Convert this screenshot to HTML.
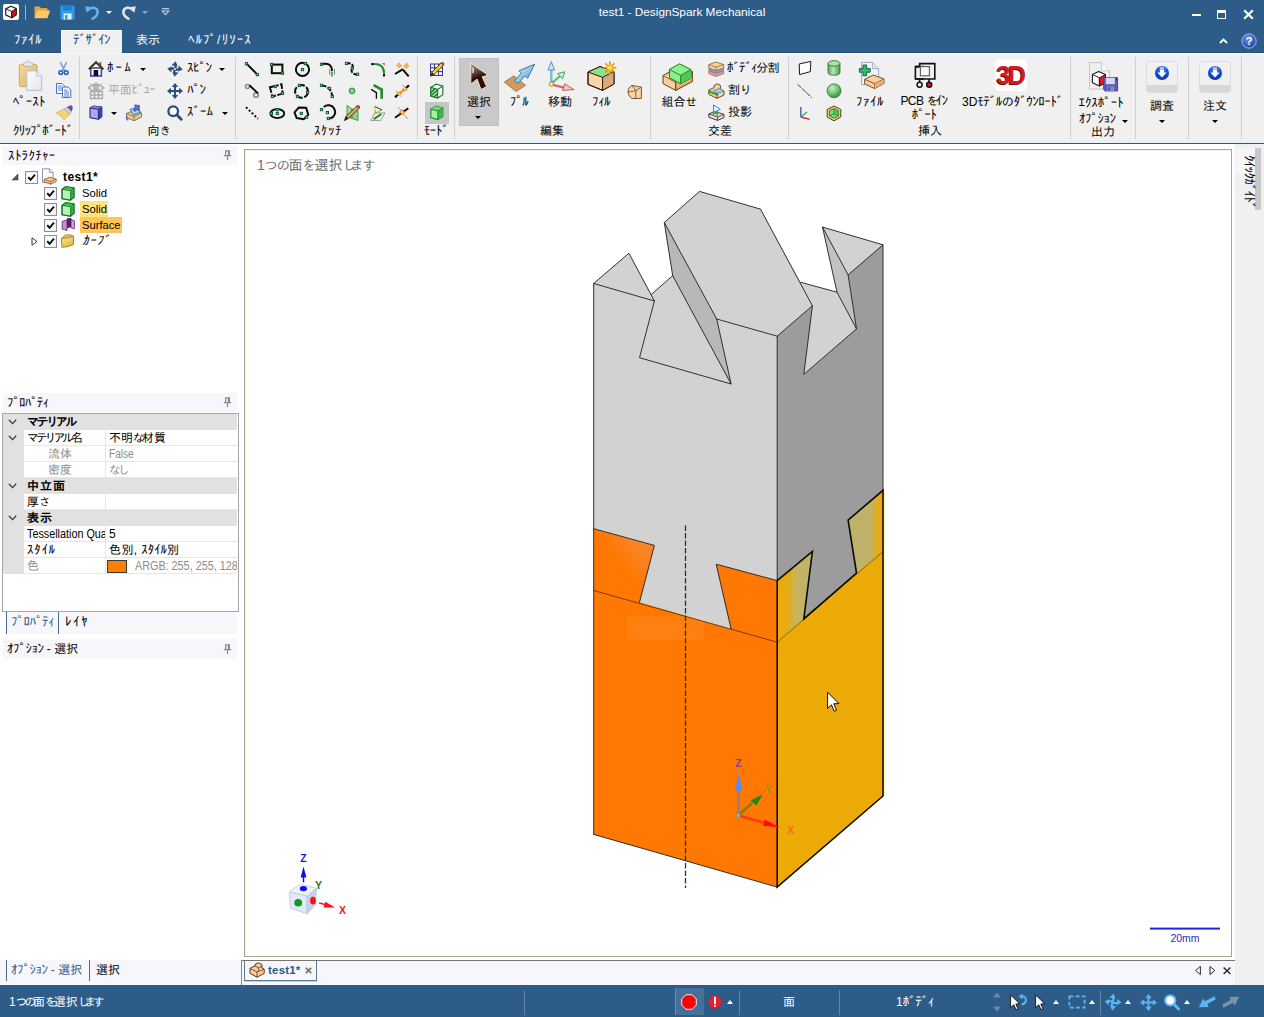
<!DOCTYPE html>
<html lang="ja">
<head>
<meta charset="utf-8">
<title>test1 - DesignSpark Mechanical</title>
<style>
html,body{margin:0;padding:0}
body{width:1264px;height:1017px;position:relative;overflow:hidden;background:#f5f5fa;
 font:12px "Liberation Sans","IPAGothic",sans-serif;color:#000}
.a{position:absolute}
.t{position:absolute;white-space:nowrap;line-height:14px;height:14px}
.c{text-align:center}
.h{font-size:13px}
.k{font-size:11.5px;letter-spacing:-2.6px}
.k2{font-size:13px;letter-spacing:-1.1px}
.k3{font-size:11.5px;letter-spacing:-2.8px}
.s3{letter-spacing:-5px}
.s2{letter-spacing:-5px}
.n{display:inline-block;transform:scaleX(.84);transform-origin:0 50%}
.w{color:#fff}
.g{color:#8c8c8c}
.sep{position:absolute;width:1px;background:#cfcfcf;top:57px;height:82px}
svg{position:absolute;overflow:visible}
.dd{position:absolute;width:0;height:0;border-left:3px solid transparent;border-right:3px solid transparent;border-top:3px solid #000}
.ud{position:absolute;width:0;height:0;border-left:3.5px solid transparent;border-right:3.5px solid transparent;border-bottom:4px solid #fff}
.cb{position:absolute;width:11px;height:11px;border:1px solid #8e8f8f;background:#fff;box-shadow:inset 0 0 0 1px #f0f0f0}
.cb svg{left:1px;top:1px}
.row{position:absolute;left:3px;width:234px;height:16px}
.row .t{top:1px}
</style>
</head>
<body>
<!-- title bar + tab strip -->
<div class="a" style="left:0;top:0;width:1264px;height:53px;background:#2d5c88"></div>
<div class="a" style="left:0;top:52px;width:1264px;height:1px;background:#2a5078"></div>
<!-- app icon -->
<div class="a" style="left:3px;top:4px;width:16px;height:16px;background:#fff;border-radius:2px"></div>
<svg style="left:3px;top:4px" width="16" height="16" viewBox="0 0 16 16">
 <path d="M8 2.2 L13.3 4.6 L13.3 10.8 L8.6 13.8 L2.7 10.9 L2.7 4.9 Z" fill="#fff" stroke="#222" stroke-width="1.2" stroke-linejoin="round"/>
 <path d="M8.6 7.4 L13.3 4.6 L13.3 10.8 L8.6 13.8 Z" fill="#d8101c" stroke="#222" stroke-width="1"/>
 <path d="M2.7 4.9 L8.6 7.4 L8.6 13.8" fill="none" stroke="#222" stroke-width="1"/>
</svg>
<div class="a" style="left:25px;top:5px;width:1px;height:15px;background:#9fb4c9"></div>
<!-- folder -->
<svg style="left:34px;top:5px" width="17" height="15" viewBox="0 0 17 15">
 <path d="M0.5 2.5 Q0.5 1.5 1.5 1.5 L5.5 1.5 L7 3 L12.5 3 Q13.5 3 13.5 4 L13.5 13 L0.5 13 Z" fill="#e8a33a"/>
 <path d="M3.2 5.5 L16.2 5.5 L13.4 13.2 L0.6 13.2 Z" fill="#fdc866"/>
</svg>
<!-- save -->
<svg style="left:60px;top:5px" width="15" height="15" viewBox="0 0 15 15">
 <path d="M0.5 0.5 L13 0.5 L14.5 2 L14.5 14.5 L0.5 14.5 Z" fill="#2f9bf0"/>
 <rect x="3" y="0.5" width="8.5" height="5" fill="#1b7fd8"/>
 <rect x="3.5" y="8.5" width="8" height="6" fill="#e9f3fc"/>
 <rect x="5" y="10" width="2.5" height="4.5" fill="#2f9bf0"/>
</svg>
<!-- undo -->
<svg style="left:84px;top:4px" width="17" height="17" viewBox="0 0 17 17">
 <path d="M4.2 5.8 C7 2.5 13.6 3 13.6 8.3 C13.6 11.5 11.5 13.2 8.6 14.6" fill="none" stroke="#5eb3f3" stroke-width="2.6" stroke-linecap="round"/>
 <path d="M1.2 2.2 L7.6 3.2 L2.6 8.8 Z" fill="#5eb3f3"/>
</svg>
<div class="dd" style="left:106px;top:11px;border-top-color:#fff"></div>
<!-- redo -->
<svg style="left:120px;top:4px" width="17" height="17" viewBox="0 0 17 17">
 <path d="M12.8 5.8 C10 2.5 3.4 3 3.4 8.3 C3.4 11.5 5.5 13.2 8.4 14.6" fill="none" stroke="#dfe6ec" stroke-width="2.6" stroke-linecap="round"/>
 <path d="M15.8 2.2 L9.4 3.2 L14.4 8.8 Z" fill="#dfe6ec"/>
</svg>
<div class="dd" style="left:142px;top:11px;border-top-color:#8fa5ba"></div>
<!-- customize -->
<svg style="left:161px;top:8px" width="9" height="8" viewBox="0 0 9 8">
 <path d="M1 0.7 H8" stroke="#c5d2de" stroke-width="1.2"/>
 <path d="M1.2 3 L4.5 6.6 L7.8 3 Z" fill="none" stroke="#c5d2de" stroke-width="1.1"/>
</svg>
<div class="t w c" id="ttl" style="left:532px;width:300px;top:5px;font-size:11.8px">test1 - DesignSpark Mechanical</div>
<!-- window controls -->
<div class="a" style="left:1192px;top:14px;width:9px;height:2px;background:#fff"></div>
<div class="a" style="left:1217px;top:10px;width:7px;height:5px;border:1.5px solid #fff;border-top-width:3px"></div>
<svg style="left:1243px;top:9px" width="11" height="11" viewBox="0 0 11 11"><path d="M1.2 1.2 L9.8 9.8 M9.8 1.2 L1.2 9.8" stroke="#fff" stroke-width="2.2"/></svg>
<!-- tabs -->
<div class="a" style="left:61px;top:30px;width:61px;height:23px;background:#f0f0f0;box-shadow:inset 1px 1px 0 #fafcff"></div>
<div class="t w" id="tab1" style="left:14px;top:33px;letter-spacing:1px"><span class="h" style="letter-spacing:0.50px">ﾌｧｲﾙ</span></div>
<div class="t" id="tab2" style="left:73px;top:33px;color:#1e3f63"><span class="h" style="letter-spacing:-0.50px">ﾃﾞｻﾞｲﾝ</span></div>
<div class="t w" id="tab3" style="left:136px;top:33px">表示</div>
<div class="t w" id="tab4" style="left:188px;top:33px;letter-spacing:1.5px"><span class="h" style="letter-spacing:1.00px">ﾍﾙﾌﾟ</span>/<span class="h" style="letter-spacing:1.00px">ﾘｿｰｽ</span></div>
<svg style="left:1219px;top:38px" width="9" height="6" viewBox="0 0 9 6"><path d="M0.9 5 L4.5 1.6 L8.1 5" fill="none" stroke="#fff" stroke-width="1.8"/></svg>
<svg style="left:1241px;top:33px" width="16" height="16" viewBox="0 0 16 16">
 <defs><radialGradient id="hg" cx="0.4" cy="0.3" r="0.8"><stop offset="0" stop-color="#6f8fe0"/><stop offset="1" stop-color="#1a3da8"/></radialGradient></defs>
 <circle cx="8" cy="8" r="7.2" fill="url(#hg)" stroke="#9fb6e6" stroke-width="1"/>
 <text x="8" y="12" text-anchor="middle" font-family="Liberation Sans, sans-serif" font-weight="bold" font-size="11" fill="#fff">?</text>
</svg>
<!-- ribbon background -->
<div class="a" style="left:0;top:53px;width:1264px;height:89px;background:#f0f0f0"></div>
<div class="a" style="left:0;top:142px;width:1264px;height:1px;background:#e2f1ff"></div>
<div class="a" style="left:0;top:53px;width:1264px;height:1px;background:#f3faff"></div>
<div class="a" style="left:0;top:143px;width:1264px;height:1px;background:#3c546c"></div>
<div class="sep" style="left:79px"></div>
<div class="sep" style="left:235px"></div>
<div class="sep" style="left:417px"></div>
<div class="sep" style="left:454px"></div>
<div class="sep" style="left:650px"></div>
<div class="sep" style="left:788px"></div>
<div class="sep" style="left:1070px"></div>
<div class="sep" style="left:1135px"></div>
<div class="sep" style="left:1188px"></div>
<div class="sep" style="left:1241px"></div>
<!-- group labels -->
<div class="t" id="gl1" style="left:13px;top:124px;letter-spacing:-0.3px"><span class="h" style="letter-spacing:-0.80px">ｸﾘｯﾌﾟﾎﾞｰﾄﾞ</span></div>
<div class="t c" style="left:128px;width:60px;top:124px">向<span class="k">き</span></div>
<div class="t c" style="left:298px;width:60px;top:124px;letter-spacing:1px"><span class="h" style="letter-spacing:0.50px">ｽｹｯﾁ</span></div>
<div class="t c" style="left:406px;width:60px;top:124px"><span class="h" style="letter-spacing:-0.50px">ﾓｰﾄﾞ</span></div>
<div class="t c" style="left:522px;width:60px;top:124px">編集</div>
<div class="t c" style="left:690px;width:60px;top:124px">交差</div>
<div class="t c" style="left:900px;width:60px;top:124px">挿入</div>
<div class="t c" style="left:1073px;width:60px;top:125px">出力</div>

<!-- ===== clipboard ===== -->
<svg style="left:18px;top:60px" width="26" height="32" viewBox="0 0 28 34">
 <defs><linearGradient id="pg1" x1="0" y1="0" x2="1" y2="1"><stop offset="0" stop-color="#f7dca0"/><stop offset="1" stop-color="#e0b25c"/></linearGradient>
 <linearGradient id="pg2" x1="0" y1="0" x2="1" y2="1"><stop offset="0" stop-color="#ffffff"/><stop offset="1" stop-color="#dfe3ee"/></linearGradient></defs>
 <rect x="1.5" y="4.5" width="19" height="24" rx="2" fill="url(#pg1)" stroke="#caa160" stroke-width="1"/>
 <path d="M6 6.5 L6 4 Q6 2.8 7.2 2.8 L9 2.8 Q9.2 0.8 11 0.8 Q12.8 0.8 13 2.8 L14.8 2.8 Q16 2.8 16 4 L16 6.5 Z" fill="#e9e9ec" stroke="#a8a8b0" stroke-width="0.8"/>
 <path d="M9.5 11.5 L20 11.5 L25.5 17 L25.5 32.5 L9.5 32.5 Z" fill="url(#pg2)" stroke="#b6bccb" stroke-width="1"/>
 <path d="M20 11.5 L20 17 L25.5 17" fill="#eef0f6" stroke="#b6bccb" stroke-width="0.8"/>
</svg>
<div class="t c" style="left:4px;width:50px;top:95px;letter-spacing:0.5px"><span class="h" style="letter-spacing:0.00px">ﾍﾟｰｽﾄ</span></div>
<!-- scissors -->
<svg style="left:58px;top:62px" width="11" height="14" viewBox="0 0 11 14">
 <path d="M2.6 0.6 L6.8 9 M8.4 0.6 L4.2 9" stroke="#7f9fd6" stroke-width="1.6" stroke-linecap="round"/>
 <circle cx="2.8" cy="10.6" r="1.9" fill="none" stroke="#2f57b8" stroke-width="1.5"/>
 <circle cx="8.2" cy="10.6" r="1.9" fill="none" stroke="#2f57b8" stroke-width="1.5"/>
</svg>
<!-- copy -->
<svg style="left:56px;top:83px" width="16" height="15" viewBox="0 0 16 15">
 <path d="M0.5 0.5 L6 0.5 L8.5 3 L8.5 10.5 L0.5 10.5 Z" fill="#f4f8ff" stroke="#4a74c0" stroke-width="1"/>
 <path d="M2 3 H5.5 M2 5 H7 M2 7 H7" stroke="#4a74c0" stroke-width="0.9"/>
 <path d="M6.5 4 L12 4 L14.8 6.8 L14.8 14.5 L6.5 14.5 Z" fill="#f4f8ff" stroke="#4a74c0" stroke-width="1"/>
 <path d="M8 7 H11.5 M8 9 H13.2 M8 11 H13.2 M8 13 H13.2" stroke="#4a74c0" stroke-width="0.9"/>
</svg>
<!-- brush -->
<svg style="left:56px;top:104px" width="17" height="17" viewBox="0 0 17 17">
 <path d="M11.1 3.2 L14.9 1.4 Q16.6 2.2 16.4 3.8 L15.5 7.6 Z" fill="#5a5ab8" stroke="#3e3590" stroke-width="0.5"/>
 <path d="M7.9 5.1 L11.1 3.2 L15.5 7.6 L13.4 10.5 Z" fill="#cfd3de" stroke="#8d92a4" stroke-width="0.6"/>
 <path d="M0.4 8.9 L7.9 5.1 L13.4 10.5 L7.9 15.8 Q5.4 11 0.4 8.9 Z" fill="#f3dc78" stroke="#c8a238" stroke-width="0.7"/>
 <path d="M4 9 L8.6 13.8 M6.4 7.4 L10.8 12" stroke="#e0c050" stroke-width="0.6"/>
</svg>

<!-- ===== orientation ===== -->
<!-- home -->
<svg style="left:88px;top:61px" width="16" height="16" viewBox="0 0 16 16">
 <rect x="2.8" y="7" width="10.6" height="8" fill="#fff" stroke="#3a3aa0" stroke-width="1.5"/>
 <rect x="5.6" y="9" width="4.6" height="6" fill="#111"/>
 <path d="M0.8 8.2 L8 1.2 L15.4 8.2" fill="none" stroke="#3d3a14" stroke-width="2" stroke-linejoin="miter"/>
 <rect x="11.4" y="1.3" width="1.8" height="3.6" fill="#b02020"/>
</svg>
<div class="t" style="left:107px;top:61px;letter-spacing:2.6px"><span class="h" style="letter-spacing:2.10px">ﾎｰﾑ</span></div>
<div class="dd" style="left:140px;top:68px"></div>
<!-- plan view (disabled) -->
<svg style="left:87px;top:82px" width="18" height="17" viewBox="0 0 18 17">
 <path d="M1 6 Q9 -1.5 17 6 Q9 12 1 6 Z" fill="#ededed" stroke="#a9a9a9" stroke-width="1.2"/>
 <circle cx="9" cy="5.5" r="2.6" fill="#bdbdbd" stroke="#9a9a9a" stroke-width="0.8"/>
 <path d="M3 1.2 L4.5 2.8 M9 0 L9 1.6 M15 1.2 L13.5 2.8" stroke="#a9a9a9" stroke-width="1"/>
 <path d="M3.5 9.5 H15.5 V16.5 H3.5 Z M3.5 13 H15.5 M7.5 9.5 V16.5 M11.5 9.5 V16.5" fill="none" stroke="#a9a9a9" stroke-width="1.3"/>
</svg>
<div class="t g" style="left:108px;top:83px;color:#a6a6a6;letter-spacing:-0.3px">平面<span class="h" style="letter-spacing:-0.80px">ﾋﾞｭｰ</span></div>
<!-- blue cube -->
<svg style="left:89px;top:105px" width="14" height="15" viewBox="0 0 14 15">
 <path d="M1 3 L4.6 1 L12.8 2 L12.8 11.6 L9.4 14.2 L1 12.8 Z" fill="#a6a8f2" stroke="#1f2470" stroke-width="1.1" stroke-linejoin="round"/>
 <path d="M9.4 4.4 L12.8 2 L12.8 11.6 L9.4 14.2 Z" fill="#3c3eb4"/>
 <path d="M1 3 L9.4 4.4 L12.8 2 L4.6 1 Z" fill="#7a7ee0"/>
 <path d="M1 3 L9.4 4.4 L12.8 2 M9.4 4.4 L9.4 14.2" fill="none" stroke="#1f2470" stroke-width="0.9"/>
</svg>
<div class="dd" style="left:111px;top:112px"></div>
<!-- snap view -->
<svg style="left:125px;top:104px" width="18" height="18" viewBox="0 0 18 18">
 <path d="M1.5 9.5 L9 6.5 L16.5 9 L16.5 13 L9 16.8 L1.5 13.5 Z" fill="#e8c98e" stroke="#7a6a52" stroke-width="0.9"/>
 <path d="M1.5 9.5 L9 12.6 L16.5 9 M9 12.6 L9 16.8" fill="none" stroke="#7a6a52" stroke-width="0.8"/>
 <path d="M5 5.5 L12.5 3 L15.5 8 L8.5 11.2 Z" fill="#9fd0ee" stroke="#3a6fa8" stroke-width="0.9"/>
 <path d="M9.5 1 L14.5 1.5 L13.8 7 L12.2 5.2 L9.8 7.4 L8.4 5.8 L10.8 3.6 Z" fill="#6a72d8" stroke="#2d3290" stroke-width="0.7"/>
 <path d="M2 12 Q0.5 15 3.2 16.2" fill="none" stroke="#5058cf" stroke-width="1.3"/>
</svg>
<!-- spin -->
<svg style="left:167px;top:61px" width="16" height="16" viewBox="0 0 16 16">
 <g fill="none" stroke="#2a4f78" stroke-width="2.2">
  <path d="M8 8 Q9.6 5 7.6 3"/><path d="M8 8 Q11 9.6 13 7.6"/><path d="M8 8 Q6.4 11 8.4 13"/><path d="M8 8 Q5 6.4 3 8.4"/>
 </g>
 <g fill="#2a4f78">
  <path d="M4.4 4.4 L8.6 0.2 L10.6 4.8 Z"/><path d="M11.6 4.4 L15.8 8.6 L11.2 10.6 Z"/><path d="M11.6 11.6 L7.4 15.8 L5.4 11.2 Z"/><path d="M4.4 11.6 L0.2 7.4 L4.8 5.4 Z"/>
 </g>
 <circle cx="8" cy="8" r="1" fill="#f0f0f0"/>
</svg>
<div class="t" style="left:187px;top:61px"><span class="h" style="letter-spacing:-0.50px">ｽﾋﾟﾝ</span></div>
<div class="dd" style="left:219px;top:68px"></div>
<!-- pan -->
<svg style="left:167px;top:83px" width="16" height="16" viewBox="0 0 18 18">
 <path d="M9 2 V16 M2 9 H16" stroke="#2a4f78" stroke-width="2.2"/>
 <g fill="#2a4f78"><path d="M9 0 L12.6 4.4 L5.4 4.4 Z"/><path d="M9 18 L12.6 13.6 L5.4 13.6 Z"/><path d="M0 9 L4.4 5.4 L4.4 12.6 Z"/><path d="M18 9 L13.6 5.4 L13.6 12.6 Z"/></g>
</svg>
<div class="t" style="left:187px;top:83px"><span class="h" style="letter-spacing:-0.50px">ﾊﾟﾝ</span></div>
<!-- zoom -->
<svg style="left:167px;top:105px" width="16" height="16" viewBox="0 0 18 18">
 <circle cx="7" cy="7" r="5.4" fill="#fff" stroke="#2a4f78" stroke-width="2.6"/>
 <path d="M11 11 L16 16" stroke="#2a4f78" stroke-width="3.2" stroke-linecap="round"/>
</svg>
<div class="t" style="left:187px;top:105px;letter-spacing:0.5px"><span class="h" style="letter-spacing:0.00px">ｽﾞｰﾑ</span></div>
<div class="dd" style="left:222px;top:112px"></div>
<!-- ===== sketch ===== -->
<svg style="left:244px;top:61px" width="16" height="16" viewBox="0 0 16 16"><path d="M2.5 2.6 L13.4 13.6" stroke="#0a0a0a" fill="none" stroke-width="2"/><rect x="1.4" y="1.5" width="2.2" height="2.2" fill="#9be0ae" stroke="#0d5c2a" stroke-width="1"/><rect x="12.3" y="12.5" width="2.2" height="2.2" fill="#9be0ae" stroke="#0d5c2a" stroke-width="1"/></svg>
<svg style="left:244px;top:83px" width="16" height="16" viewBox="0 0 16 16"><circle cx="3.5" cy="3.6" r="2" fill="none" stroke="#8a8a8a" stroke-width="1.5"/><circle cx="12" cy="12" r="2.3" fill="none" stroke="#8a8a8a" stroke-width="1.6"/><path d="M5.4 2.3 L14 10.4" stroke="#0a0a0a" fill="none" stroke-width="1.9"/></svg>
<svg style="left:244px;top:105px" width="16" height="16" viewBox="0 0 16 16"><path d="M2 2.2 L14 13.8" stroke="#0a0a0a" fill="none" stroke-width="2" stroke-dasharray="2 2"/></svg>
<svg style="left:269px;top:61px" width="16" height="16" viewBox="0 0 16 16"><rect x="2.8" y="3.6" width="10.6" height="8.6" stroke="#0a0a0a" fill="none" stroke-width="2"/><rect x="1.5" y="2.4" width="2.2" height="2.2" fill="#9be0ae" stroke="#0d5c2a" stroke-width="1"/><rect x="12.4" y="11.1" width="2.2" height="2.2" fill="#9be0ae" stroke="#0d5c2a" stroke-width="1"/></svg>
<svg style="left:269px;top:83px" width="16" height="16" viewBox="0 0 16 16"><path d="M0.9 4.3 L12.5 1.3 L13.7 10.6 L3.4 13.5 Z" stroke="#0a0a0a" fill="none" stroke-width="1.9" stroke-dasharray="9 1.5 6 1.5"/><rect x="5.2" y="2.4" width="2.2" height="2.2" fill="#9be0ae" stroke="#0d5c2a" stroke-width="1"/><rect x="12.4" y="9.3" width="2.2" height="2.2" fill="#9be0ae" stroke="#0d5c2a" stroke-width="1"/><rect x="2.3" y="12.4" width="2.2" height="2.2" fill="#9be0ae" stroke="#0d5c2a" stroke-width="1"/></svg>
<svg style="left:269px;top:105px" width="16" height="16" viewBox="0 0 16 16"><ellipse cx="8.3" cy="8.6" rx="6.9" ry="4.5" stroke="#0a0a0a" fill="none" stroke-width="1.9"/><rect x="7.2" y="3.5" width="2.2" height="2.2" fill="#9be0ae" stroke="#0d5c2a" stroke-width="1"/><rect x="1.3" y="7.4" width="2.2" height="2.2" fill="#9be0ae" stroke="#0d5c2a" stroke-width="1"/><rect x="7.2" y="7.4" width="2.2" height="2.2" fill="#9be0ae" stroke="#0d5c2a" stroke-width="1"/></svg>
<svg style="left:294px;top:61px" width="16" height="16" viewBox="0 0 16 16"><circle cx="8.5" cy="8.4" r="6.6" stroke="#0a0a0a" fill="none" stroke-width="2"/><rect x="7.4" y="7.5" width="2.2" height="2.2" fill="#9be0ae" stroke="#0d5c2a" stroke-width="1"/><rect x="10.3" y="1.5" width="2.2" height="2.2" fill="#9be0ae" stroke="#0d5c2a" stroke-width="1"/></svg>
<svg style="left:294px;top:83px" width="16" height="16" viewBox="0 0 16 16"><circle cx="7.5" cy="8.4" r="6.4" stroke="#0a0a0a" fill="none" stroke-width="2" stroke-dasharray="7 1.6"/><rect x="4.4" y="1.3" width="2.2" height="2.2" fill="#9be0ae" stroke="#0d5c2a" stroke-width="1"/><rect x="12.5" y="8.3" width="2.2" height="2.2" fill="#9be0ae" stroke="#0d5c2a" stroke-width="1"/><rect x="2.4" y="12.4" width="2.2" height="2.2" fill="#9be0ae" stroke="#0d5c2a" stroke-width="1"/></svg>
<svg style="left:294px;top:105px" width="16" height="16" viewBox="0 0 16 16"><path d="M4.9 2.4 L12.2 2.8 L14.3 9.9 L9.7 14.3 L2.7 13.1 L0.5 7.3 Z" stroke="#0a0a0a" fill="none" stroke-width="2" stroke-linejoin="round"/><rect x="6.2" y="7.4" width="2.2" height="2.2" fill="#9be0ae" stroke="#0d5c2a" stroke-width="1"/><rect x="11.4" y="11.2" width="2.2" height="2.2" fill="#9be0ae" stroke="#0d5c2a" stroke-width="1"/></svg>
<svg style="left:319px;top:61px" width="16" height="16" viewBox="0 0 16 16"><path d="M3 3 Q12.8 1 13 10" stroke="#0a0a0a" fill="none" stroke-width="2"/><path d="M12.9 10.6 V15.6" stroke="#8a8a8a" stroke-width="2"/><path d="M10.8 8 V13.6 M15.5 8 V13.6" stroke="#2c9a4a" stroke-width="0.9"/><rect x="1.4" y="2.2" width="2.2" height="2.2" fill="#9be0ae" stroke="#0d5c2a" stroke-width="1"/></svg>
<svg style="left:319px;top:83px" width="16" height="16" viewBox="0 0 16 16"><path d="M2.5 2.4 Q12 3 13.3 13.5" stroke="#0a0a0a" fill="none" stroke-width="2" stroke-dasharray="5 1.4"/><rect x="1.4" y="1.3" width="2.2" height="2.2" fill="#9be0ae" stroke="#0d5c2a" stroke-width="1"/><rect x="9.4" y="4.3" width="2.2" height="2.2" fill="#9be0ae" stroke="#0d5c2a" stroke-width="1"/><rect x="12.2" y="12.4" width="2.2" height="2.2" fill="#9be0ae" stroke="#0d5c2a" stroke-width="1"/></svg>
<svg style="left:319px;top:105px" width="16" height="16" viewBox="0 0 16 16"><path d="M4.8 1.9 A6.8 6.8 0 1 1 11.2 13.5" stroke="#0a0a0a" fill="none" stroke-width="2"/><rect x="1.4" y="3.5" width="2.2" height="2.2" fill="#9be0ae" stroke="#0d5c2a" stroke-width="1"/><rect x="7.3" y="6.5" width="2.2" height="2.2" fill="#9be0ae" stroke="#0d5c2a" stroke-width="1"/><rect x="8.3" y="12.4" width="2.2" height="2.2" fill="#9be0ae" stroke="#0d5c2a" stroke-width="1"/></svg>
<svg style="left:344px;top:61px" width="16" height="16" viewBox="0 0 16 16"><path d="M2.5 2.4 C9 1.5 9.5 5 8 7.5 C6 11 10 14 13.5 13.3" stroke="#0a0a0a" fill="none" stroke-width="2" stroke-dasharray="4 1.3"/><rect x="1.4" y="1.3" width="2.2" height="2.2" fill="#9be0ae" stroke="#0d5c2a" stroke-width="1"/><rect x="7.3" y="6.2" width="2.2" height="2.2" fill="#9be0ae" stroke="#0d5c2a" stroke-width="1"/><rect x="12.4" y="12.2" width="2.2" height="2.2" fill="#9be0ae" stroke="#0d5c2a" stroke-width="1"/></svg>
<svg style="left:344px;top:83px" width="16" height="16" viewBox="0 0 16 16"><circle cx="8.05" cy="7.9" r="2.9" fill="#7fd486" stroke="#2c8a3a" stroke-width="1"/></svg>
<svg style="left:344px;top:105px" width="16" height="16" viewBox="0 0 16 16"><path d="M3 0.3 L8 4 L8 13.5 L3 12 Z" fill="#a8dca8" stroke="#2c8a3a" stroke-width="0.8"/><path d="M8 4 L14 6 L14 15.5 L8 13.5 Z" fill="#8fd08f" stroke="#2c8a3a" stroke-width="0.8"/><path d="M0.3 15.6 L2.2 11 L12.6 1.2 L15.2 3.4 L4.4 13.6 Z" fill="#c8a850" stroke="#3a2a10" stroke-width="0.8"/><path d="M0.3 15.6 L2.2 11 L4.4 13.6 Z" fill="#2a2018"/><path d="M12.6 1.2 Q14.6 -0.4 15.8 1.4 L15.2 3.4 Z" fill="#c96a50" stroke="#3a2a10" stroke-width="0.6"/></svg>
<svg style="left:370px;top:61px" width="16" height="16" viewBox="0 0 16 16"><path d="M1.2 3.1 H4.2" stroke="#0a0a0a" fill="none" stroke-width="2"/><path d="M4.4 3.1 Q14 3 14 12" fill="none" stroke="#1f8a2c" stroke-width="2"/><path d="M14 12.4 V15.6" stroke="#0a0a0a" fill="none" stroke-width="2"/><path d="M12 2 L14.8 2 L14.8 4.8 Z" fill="#c85a5a"/></svg>
<svg style="left:370px;top:83px" width="16" height="16" viewBox="0 0 16 16"><path d="M1.2 6.4 L6.4 9.6 L6.4 15.8" stroke="#0a0a0a" fill="none" stroke-width="1.3"/><path d="M3.6 2.2 L11.7 6.6 L11.7 15.8" fill="none" stroke="#1f8a2c" stroke-width="2.6"/></svg>
<svg style="left:370px;top:105px" width="16" height="16" viewBox="0 0 16 16"><path d="M4.5 1.5 L12 4.8 L5 8.6 Z" fill="none" stroke="#222" stroke-width="0.9"/><path d="M4.2 1.6 L4.2 9.4 L11.6 5.6" fill="none" stroke="#f0ee70" stroke-width="1.6"/><path d="M5 8 L15 8 L10.6 15.4 L0.8 15.4 Z" fill="#f8f8f8" stroke="#8a8a8a" stroke-width="0.9"/><path d="M4.5 13.6 L10.6 9.6" stroke="#1f8a2c" stroke-width="2.2" stroke-linecap="round"/></svg>
<svg style="left:394px;top:61px" width="16" height="16" viewBox="0 0 16 16"><path d="M1 13 L8.6 8.3 L14.7 15.4" stroke="#0a0a0a" fill="none" stroke-width="2"/><path d="M8.6 8.3 L4 2 M8.6 8.3 L13.6 2.4" stroke="#c8c8c8" stroke-width="0.9"/><path d="M5 1.2999999999999998 L6.1 3.4 L8.2 4.5 L6.1 5.6 L5 7.7 L3.9 5.6 L1.7999999999999998 4.5 L3.9 3.4 Z" fill="#ff7a14"/><circle cx="5" cy="4.5" r="1.3" fill="#ffd03a"/><path d="M12.4 1.5999999999999996 L13.5 3.7 L15.600000000000001 4.8 L13.5 5.9 L12.4 8.0 L11.3 5.9 L9.2 4.8 L11.3 3.7 Z" fill="#ff7a14"/><circle cx="12.4" cy="4.8" r="1.3" fill="#ffd03a"/></svg>
<svg style="left:394px;top:83px" width="16" height="16" viewBox="0 0 16 16"><path d="M1.5 13.8 L5 10.8 M11 5.8 L14.3 2.9" stroke="#0a0a0a" fill="none" stroke-width="2"/><circle cx="14.2" cy="3" r="1.2" fill="#0a0a0a"/><circle cx="1.8" cy="13.6" r="1.2" fill="#0a0a0a"/><path d="M8.6 1.8 L13.6 7.4 M2 7.8 L7.4 14" stroke="#9a9a9a" stroke-width="0.9"/><path d="M5 10.8 L11 5.8" stroke="#ff8a1a" stroke-width="2.2"/><path d="M4.8 8.0 L5.8 9.8 L7.6 10.8 L5.8 11.8 L4.8 13.600000000000001 L3.8 11.8 L2.0 10.8 L3.8 9.8 Z" fill="#ff7a14"/><circle cx="4.8" cy="10.8" r="1.2" fill="#ffd03a"/><path d="M11 3.2 L12.0 5.0 L13.8 6 L12.0 7.0 L11 8.8 L10.0 7.0 L8.2 6 L10.0 5.0 Z" fill="#ff7a14"/><circle cx="11" cy="6" r="1.2" fill="#ffd03a"/></svg>
<svg style="left:394px;top:105px" width="16" height="16" viewBox="0 0 16 16"><path d="M4.3 2.3 L13.8 14.1" stroke="#9a9a9a" stroke-width="1"/><path d="M1 12.7 L14.3 3.2" stroke="#0a0a0a" fill="none" stroke-width="2"/><path d="M8.1 3.8000000000000003 L9.3 6.0 L11.5 7.2 L9.3 8.4 L8.1 10.6 L6.9 8.4 L4.699999999999999 7.2 L6.9 6.0 Z" fill="#ff7a14"/><circle cx="8.1" cy="7.2" r="1.4" fill="#ffd03a"/></svg>
<!-- ===== mode ===== -->
<div class="a" style="left:425px;top:102px;width:24px;height:22px;background:#c6c6c6"></div>
<svg style="left:428px;top:61px" width="16" height="16" viewBox="0 0 16 16"><rect x="2.5" y="3" width="12" height="11.5" fill="#f4f4fa" stroke="#3a3a7a" stroke-width="1"/><path d="M2.5 6.8 H14.5 M2.5 10.6 H14.5 M6.5 3 V14.5 M10.5 3 V14.5" stroke="#3a3a7a" stroke-width="1"/><path d="M2.4 15.2 L4 11.2 L13 2 L15.4 4.2 L6.2 13.6 Z" fill="#e6d23a" stroke="#3a2a10" stroke-width="0.8"/><path d="M2.4 15.2 L4 11.2 L6.2 13.6 Z" fill="#2a2018"/><path d="M13 2 Q14.8 0.4 16 2.2 L15.4 4.2 Z" fill="#d27a5a" stroke="#3a2a10" stroke-width="0.6"/></svg>
<svg style="left:428px;top:83px" width="16" height="16" viewBox="0 0 16 16"><path d="M2.8 4.4 L8 1.2 L14.8 3 L14.8 11.8 L9.6 15 L2.8 13 Z" fill="#fff" stroke="#1f7a2c" stroke-width="1.2" stroke-linejoin="round"/><path d="M2.8 4.4 L9.6 6.4 L9.6 15 L2.8 13 Z" fill="#b6ecb6" stroke="#1f7a2c" stroke-width="1.2"/><path d="M9.6 6.4 L14.8 3" stroke="#1f7a2c" stroke-width="1.2"/><path d="M3 9.6 L7 5.8 M3.2 12.8 L9.4 7 M6 14 L9.6 10.6" stroke="#1f7a2c" stroke-width="1.5"/></svg>
<svg style="left:428px;top:105px" width="16" height="16" viewBox="0 0 16 16"><path d="M2.8 4.2 L8 1.2 L14.8 3 L14.8 11.6 L9.8 14.6 L2.8 12.6 Z" fill="#a6f0a6" stroke="#1f8a2c" stroke-width="1.2" stroke-linejoin="round"/><path d="M9.8 6 L14.8 3 L14.8 11.6 L9.8 14.6 Z" fill="#3fb54a"/><path d="M2.8 4.2 L8 1.2 L14.8 3 L9.8 6 Z" fill="#6ed878"/><path d="M2.8 4.2 L9.8 6 L14.8 3 M9.8 6 L9.8 14.6" fill="none" stroke="#1f8a2c" stroke-width="1"/></svg>
<!-- ===== edit ===== -->
<div class="a" style="left:459px;top:58px;width:38px;height:66px;background:#c9c9c9;border:1px solid #bfbfbf"></div>
<svg style="left:468px;top:61px" width="22" height="30" viewBox="0 0 22 30">
 <defs><linearGradient id="ag" x1="0" y1="0" x2="0.25" y2="1"><stop offset="0" stop-color="#b0a29c"/><stop offset="0.35" stop-color="#6a5248"/><stop offset="0.62" stop-color="#2a0e04"/><stop offset="1" stop-color="#2a0e04"/></linearGradient></defs>
 <path d="M2.8 2 L2.8 23.2 L9.1 18.1 L13 28.6 L18.6 25.6 L14.2 15.8 L20.1 14.2 Z" fill="url(#ag)" stroke="#fbe0cc" stroke-width="1" stroke-linejoin="round"/>
 <path d="M4.4 6 L4.4 12.6 L5.8 11.8 L5.8 7.6 Z" fill="#fff" opacity="0.9"/>
</svg>
<div class="t c" style="left:459px;width:40px;top:95px">選択</div>
<div class="dd" style="left:475px;top:116px"></div>
<!-- pull -->
<svg style="left:503px;top:62px" width="34" height="31" viewBox="0 0 34 31">
 <defs><linearGradient id="plg" x1="0" y1="0" x2="1" y2="1"><stop offset="0" stop-color="#d9f0fb"/><stop offset="1" stop-color="#4aa0d6"/></linearGradient></defs>
 <path d="M1.3 20.1 L10.8 13.8 L22.6 23.3 L13.1 29.6 Z" fill="#d39a5e" stroke="#9a6a3a" stroke-width="0.8"/>
 <path d="M11.6 18.6 L18.4 11.2 L16 8.8 L31.6 2.2 L24.6 16.2 L22 13.8 L15 21.6 Z" fill="url(#plg)" stroke="#2a6a9a" stroke-width="0.9" stroke-linejoin="round"/>
</svg>
<div class="t c" style="left:499px;width:40px;top:95px"><span class="h" style="letter-spacing:-0.50px">ﾌﾟﾙ</span></div>
<!-- move -->
<svg style="left:546px;top:60px" width="30" height="32" viewBox="0 0 30 32">
 <path d="M5.3 23 L5.3 8" stroke="#7ab8e0" stroke-width="2.4"/>
 <path d="M5.3 1.6 L8.6 10 L2 10 Z" fill="#cfe8f8" stroke="#3a7ab0" stroke-width="0.8"/>
 <path d="M6.5 22.6 L14.5 15.5" stroke="#5ac07a" stroke-width="2.2"/>
 <path d="M18.8 11.8 L16.6 18.6 L11.4 13.6 Z" fill="#c6f0d0" stroke="#2c8a4a" stroke-width="0.8"/>
 <path d="M7 24.8 L18 27.6" stroke="#d46a6a" stroke-width="2.4"/>
 <path d="M28 29.6 L16.6 30.4 L18.8 23.8 Z" fill="#f6c6c6" stroke="#b03a3a" stroke-width="0.8"/>
 <circle cx="5.3" cy="24.2" r="2.2" fill="#f6f08a" stroke="#8a8a1a" stroke-width="0.8"/>
</svg>
<div class="t c" style="left:540px;width:40px;top:95px">移動</div>
<!-- fill -->
<svg style="left:586px;top:60px" width="32" height="32" viewBox="0 0 32 32">
 <path d="M2 12 L14 6.6 L28 11.4 L28 24 L16.6 30.4 L2 24.4 Z" fill="#fbd3a8" stroke="#2a1a0a" stroke-width="1" stroke-linejoin="round"/>
 <path d="M16.6 17.4 L28 11.4 L28 24 L16.6 30.4 Z" fill="#e0a878"/>
 <path d="M2 12 L14 6.6 L28 11.4 L16.6 17.4 Z" fill="#8ee28e"/>
 <path d="M2 12 L16.6 17.4 L28 11.4 M16.6 17.4 L16.6 30.4" fill="none" stroke="#2a1a0a" stroke-width="1"/>
 <path d="M2 12 L14 6.6 L28 11.4 L28 24 L16.6 30.4 L2 24.4 Z" fill="none" stroke="#2a1a0a" stroke-width="1" stroke-linejoin="round"/>
 <g stroke="#f08a10" stroke-width="1.6"><path d="M23.8 1.2 V14.4 M17.2 7.8 H30.4 M19.2 3.2 L28.4 12.4 M28.4 3.2 L19.2 12.4"/></g>
 <circle cx="23.8" cy="7.8" r="3.4" fill="#ffb81a"/><circle cx="23.8" cy="7.8" r="1.8" fill="#ffe86a"/>
</svg>
<div class="t c" style="left:581px;width:40px;top:95px"><span class="h" style="letter-spacing:-0.50px">ﾌｨﾙ</span></div>
<!-- small blend -->
<svg style="left:627px;top:84px" width="16" height="16" viewBox="0 0 16 16">
 <path d="M1 8 Q0.8 3.6 5 1.4 L14.4 3.2 L14.4 14.4 L5.2 14.6 Q1.2 12.6 1 8 Z" fill="#fbd3a8" stroke="#6a4a2a" stroke-width="0.9" stroke-linejoin="round"/>
 <path d="M5 1.4 L9 6.6 L14.4 3.2 M9 6.6 L8.6 14.4 M9 6.6 Q5 7.5 1 8" fill="none" stroke="#6a4a2a" stroke-width="0.8"/>
</svg>
<!-- ===== intersect ===== -->
<svg style="left:662px;top:62px" width="32" height="30" viewBox="0 0 32 30">
 <path d="M1 13.5 L8 9.8 L8 14 L17 19 L17 15.6 L30.4 9.4 L30.4 19.4 L13.6 28.4 L1 21.6 Z" fill="#f9d0a0" stroke="#6a3a10" stroke-width="1" stroke-linejoin="round"/>
 <path d="M13.6 20.4 L30.4 11 L30.4 19.4 L13.6 28.4 Z" fill="#e6b07a" stroke="#6a3a10" stroke-width="0.8"/>
 <path d="M1 13.5 L13.6 20.4 L13.6 28.4" fill="none" stroke="#6a3a10" stroke-width="0.8"/>
 <path d="M7.4 7.4 L17.6 1.8 L29 7.6 L29 16 L18.6 21.8 L7.4 15.6 Z" fill="#8cf08c" stroke="#1a7a2a" stroke-width="1" stroke-linejoin="round"/>
 <path d="M18.6 13.4 L29 7.6 L29 16 L18.6 21.8 Z" fill="#4fc85a"/>
 <path d="M7.4 7.4 L18.6 13.4 L29 7.6 M18.6 13.4 L18.6 21.8" fill="none" stroke="#1a7a2a" stroke-width="0.9"/>
</svg>
<div class="t c" style="left:653px;width:50px;top:95px">組合<span class="k">せ</span></div>
<!-- split body -->
<svg style="left:708px;top:61px" width="17" height="16" viewBox="0 0 17 16">
 <path d="M0.8 9.6 L8 12.4 L15.6 9.6 L15.6 12.6 L8 15.4 L0.8 12.6 Z" fill="#e89a9a" stroke="#b05a5a" stroke-width="0.8"/>
 <path d="M0.8 7.2 L8 10 L15.6 7.2 L15.6 9.2 L8 12 L0.8 9.2 Z" fill="#7ab8e8" stroke="#3a7ab0" stroke-width="0.6"/>
 <path d="M0.8 3.6 L8 1 L15.6 3.6 L15.6 7 L8 9.8 L0.8 7 Z" fill="#f9d0a0" stroke="#8a5a2a" stroke-width="0.8" stroke-linejoin="round"/>
 <path d="M0.8 3.6 L8 6.2 L15.6 3.6 M8 6.2 L8 9.8" fill="none" stroke="#8a5a2a" stroke-width="0.7"/>
</svg>
<div class="t" style="left:727px;top:61px;letter-spacing:-0.6px"><span class="h" style="letter-spacing:-1.10px">ﾎﾞﾃﾞｨ</span>分割</div>
<!-- split -->
<svg style="left:708px;top:83px" width="17" height="16" viewBox="0 0 17 16">
 <path d="M0.8 7 L6 4.6 L6 2.6 L9.4 0.8 L12.4 2.4 L12.4 6 L16 8 L16 12 L9 15.4 L0.8 11.4 Z" fill="#f9d0a0" stroke="#5a3a1a" stroke-width="0.9" stroke-linejoin="round"/>
 <path d="M5.6 7.4 L12 5.6 L16 8 L9.4 10.4 Z" fill="#9ad0f0" stroke="#3a7ab0" stroke-width="0.7"/>
 <path d="M0.8 7.6 L9.4 10.8 L9.2 12.2 L0.8 9.2 Z" fill="#3fc04a" stroke="#1a7a2a" stroke-width="0.6"/>
 <path d="M9.2 10.6 L9 15.4" stroke="#5a3a1a" stroke-width="0.8"/>
</svg>
<div class="t" style="left:728px;top:83px">割<span class="k">り</span></div>
<!-- project -->
<svg style="left:708px;top:104px" width="17" height="17" viewBox="0 0 17 17">
 <path d="M0.8 10 L6.4 7.4 L16 10.4 L16 13.6 L9.6 16.4 L0.8 13.2 Z" fill="#fbe0c0" stroke="#2a1a5a" stroke-width="0.9" stroke-linejoin="round"/>
 <path d="M0.8 10 L9.6 13 L16 10.4 M9.6 13 L9.6 16.4" fill="none" stroke="#2a1a5a" stroke-width="0.8"/>
 <path d="M5.6 1 L12.4 5.4 L5.6 8.2 Z" fill="#eaf6ff" stroke="#3a8ad0" stroke-width="1"/>
 <path d="M5.2 9.6 L9.2 8 L9.2 12 M5.4 8 L5.4 12" fill="none" stroke="#2fb03a" stroke-width="1.5"/>
</svg>
<div class="t" style="left:728px;top:105px">投影</div>
<!-- ===== insert ===== -->
<svg style="left:798px;top:60px" width="14" height="16" viewBox="0 0 14 16"><path d="M1.2 4 L12.8 1.4 L12.4 11.6 L1.6 14.6 Z" fill="#fdfdfd" stroke="#1a1a1a" stroke-width="1"/></svg>
<svg style="left:796px;top:83px" width="17" height="16" viewBox="0 0 17 16"><path d="M1.6 1.4 L15.8 14.6" stroke="#3a3a3a" stroke-width="1" stroke-dasharray="5 1"/></svg>
<svg style="left:797px;top:105px" width="14" height="16" viewBox="0 0 14 16"><path d="M3.8 2 V12" stroke="#2a5ab0" stroke-width="1.3"/><path d="M3.8 12 L10 7" stroke="#3a9a4a" stroke-width="1.1"/><path d="M3.8 12 L12.6 14.4" stroke="#c02a2a" stroke-width="1.3"/></svg>
<svg style="left:827px;top:60px" width="14" height="16" viewBox="0 0 14 16">
 <defs><linearGradient id="cyg" x1="0" y1="0" x2="1" y2="0"><stop offset="0" stop-color="#5aa85a"/><stop offset="0.45" stop-color="#b6e8b6"/><stop offset="1" stop-color="#4a9a4a"/></linearGradient></defs>
 <path d="M1 3.4 V12.4 Q1 15.2 7 15.2 Q13 15.2 13 12.4 V3.4 Z" fill="url(#cyg)" stroke="#2a6a2a" stroke-width="0.8"/>
 <ellipse cx="7" cy="3.4" rx="6" ry="2.8" fill="#a8e0a8" stroke="#2a6a2a" stroke-width="0.8"/>
</svg>
<svg style="left:826px;top:83px" width="16" height="16" viewBox="0 0 16 16">
 <defs><radialGradient id="spg" cx="0.38" cy="0.32" r="0.7"><stop offset="0" stop-color="#c8f0c8"/><stop offset="0.6" stop-color="#6ac06a"/><stop offset="1" stop-color="#3a8a3a"/></radialGradient></defs>
 <circle cx="8" cy="7.8" r="7" fill="url(#spg)" stroke="#2a6a2a" stroke-width="0.7"/>
</svg>
<svg style="left:826px;top:105px" width="16" height="17" viewBox="0 0 16 17">
 <path d="M1.2 4.4 L8 1 L14.8 4.4 L14.8 12 L8 15.8 L1.2 12 Z" fill="#f4c88a" stroke="#5a3a0a" stroke-width="1" stroke-linejoin="round"/>
 <path d="M3.6 5.6 L8 3.6 L12.4 5.6 L12.4 10.8 L8 13.2 L3.6 10.8 Z" fill="#7fe07f" stroke="#1a7a2a" stroke-width="0.9"/>
 <path d="M8 3.6 L8 9 L3.6 10.8 M8 9 L12.4 10.8" fill="none" stroke="#1a7a2a" stroke-width="0.8"/>
 <path d="M8 9 L12.4 10.8 L12.4 5.6 L8 3.6 Z" fill="#3fb04a" opacity="0.7"/>
</svg>
<!-- file -->
<svg style="left:857px;top:60px" width="30" height="31" viewBox="0 0 30 31">
 <path d="M4.6 2.4 L15.4 2.4 L21.6 8.6 L21.6 24.6 L4.6 24.6 Z" fill="#f2f5fb" stroke="#9aa6c0" stroke-width="1"/>
 <path d="M15.4 2.4 L15.4 8.6 L21.6 8.6" fill="#dfe5f2" stroke="#9aa6c0" stroke-width="0.9"/>
 <path d="M7.6 19.4 L16.4 15 L27 19 L27 23.4 L17.6 28.6 L7.6 23.8 Z" fill="#f7cfa0" stroke="#6a3a10" stroke-width="0.9" stroke-linejoin="round"/>
 <path d="M7.6 19.4 L17.6 23.6 L27 19 M17.6 23.6 L17.6 28.6" fill="none" stroke="#6a3a10" stroke-width="0.8"/>
 <path d="M17.6 23.6 L27 19 L27 23.4 L17.6 28.6 Z" fill="#e0aa74" opacity="0.8"/>
 <path d="M6 5 H9.6 V8.6 H13.2 V12.2 H9.6 V15.8 H6 V12.2 H2.4 V8.6 H6 Z" fill="#3fb56a" stroke="#0f6a3a" stroke-width="1" stroke-linejoin="round"/>
</svg>
<div class="t c" style="left:845px;width:50px;top:95px;letter-spacing:1px"><span class="h" style="letter-spacing:0.50px">ﾌｧｲﾙ</span></div>
<!-- PCB -->
<svg style="left:912px;top:60px" width="26" height="31" viewBox="0 0 26 31">
 <path d="M7.6 6.6 V3.6 H22.8 V19 H17 M17 19 V22 M7.6 19 V22 M12 19 H3.4 V6.6 H7.6" fill="none" stroke="#111" stroke-width="1.6"/>
 <path d="M3.4 6.6 H12 M3.4 19 H17" stroke="#111" stroke-width="1.6"/>
 <rect x="8.4" y="6.6" width="9" height="9.2" fill="#fafafa" stroke="#5a5a5a" stroke-width="1.1"/>
 <circle cx="7.6" cy="24.8" r="2.5" fill="#fff" stroke="#111" stroke-width="1.5"/>
 <circle cx="17.2" cy="24.8" r="2.5" fill="#e01a1a" stroke="#111" stroke-width="1.5"/>
</svg>
<div class="t c" style="left:894px;width:60px;top:94px"><span style="letter-spacing:-0.6px">PCB</span> <span class="k">を</span><span class="h" style="letter-spacing:-0.50px">ｲﾝ</span></div>
<div class="t c" style="left:894px;width:60px;top:108px"><span class="h" style="letter-spacing:-0.50px">ﾎﾟｰﾄ</span></div>
<!-- 3D -->
<div class="a" style="left:995px;top:59px;width:32px;height:32px;background:#fff;border-radius:5px"></div>
<div class="t" style="left:994px;top:60px;width:32px;height:30px;text-align:center;font:bold 25px/30px 'Liberation Sans',sans-serif;color:#d01c24;letter-spacing:-2.4px;text-shadow:-1px 1px 0 #7a0c10">3D</div>
<div class="t" id="dl3d" style="left:962px;top:95px">3D<span class="h" style="letter-spacing:-0.50px">ﾓﾃﾞﾙ</span>の<span class="h" style="letter-spacing:-0.50px">ﾀﾞｳﾝﾛｰﾄﾞ</span></div>
<!-- ===== output ===== -->
<svg style="left:1087px;top:60px" width="33" height="33" viewBox="0 0 33 33">
 <path d="M2.6 2.6 L14.4 2.6 L22.6 10.8 L22.6 29 L2.6 29 Z" fill="#f0f0f0" stroke="#c4c4c8" stroke-width="1"/>
 <path d="M14.4 2.6 L14.4 10.8 L22.6 10.8" fill="#fafafa" stroke="#c4c4c8" stroke-width="0.9"/>
 <path d="M11.6 11.4 L18.4 14.6 L18.4 22.6 L12.4 26 L5.4 22.8 L5.4 14.6 Z" fill="#fff" stroke="#1a1a1a" stroke-width="1.1" stroke-linejoin="round"/>
 <path d="M12.4 17.8 L18.4 14.6 L18.4 22.6 L12.4 26 Z" fill="#e01a24" stroke="#1a1a1a" stroke-width="0.9"/>
 <path d="M5.4 14.6 L12.4 17.8 L12.4 26" fill="none" stroke="#1a1a1a" stroke-width="0.9"/>
 <path d="M16.6 17.6 L30.6 17.6 L30.6 31 L18 31 L16.6 29.6 Z" fill="#5a58b8" stroke="#3a3890" stroke-width="0.8"/>
 <rect x="18.8" y="17.8" width="9" height="6.4" fill="#d6d8f4"/>
 <rect x="20" y="26.4" width="7.4" height="4.6" fill="#8a88c8"/>
 <rect x="21.2" y="27.2" width="2" height="3.2" fill="#4a4898"/>
 <rect x="29" y="18.6" width="1" height="1.6" fill="#1a1a50"/>
</svg>
<div class="t c" style="left:1071px;width:60px;top:96px;letter-spacing:0.4px"><span class="h" style="letter-spacing:-0.10px">ｴｸｽﾎﾟｰﾄ</span></div>
<div class="t" style="left:1079px;top:112px"><span class="h" style="letter-spacing:-0.50px">ｵﾌﾟｼｮﾝ</span></div>
<div class="dd" style="left:1122px;top:120px"></div>
<!-- investigate / order -->
<div class="a" style="left:1146px;top:61px;width:30px;height:30px;border:1px solid #dcdcdc;border-radius:4px;background:linear-gradient(#f2f2f2 0,#efefef 76%,#d8d8d8 76%,#d8d8d8 100%)"></div>
<div class="a" style="left:1199px;top:61px;width:30px;height:30px;border:1px solid #dcdcdc;border-radius:4px;background:linear-gradient(#f2f2f2 0,#efefef 76%,#d8d8d8 76%,#d8d8d8 100%)"></div>
<svg style="left:1154px;top:65px" width="16" height="16" viewBox="0 0 16 16">
 <defs><radialGradient id="dlg" cx="0.5" cy="0.25" r="0.8"><stop offset="0" stop-color="#5a9af0"/><stop offset="0.5" stop-color="#1450d8"/><stop offset="1" stop-color="#0a2ea0"/></radialGradient></defs>
 <circle cx="8" cy="8" r="7" fill="url(#dlg)"/>
 <path d="M6 2.4 H10 V3.4 H6 Z M6 4.4 H10 V7.6 H12.6 L8 12.6 L3.4 7.6 H6 Z" fill="#fff"/>
</svg>
<svg style="left:1207px;top:65px" width="16" height="16" viewBox="0 0 16 16">
 <circle cx="8" cy="8" r="7" fill="url(#dlg)"/>
 <path d="M6 2.4 H10 V3.4 H6 Z M6 4.4 H10 V7.6 H12.6 L8 12.6 L3.4 7.6 H6 Z" fill="#fff"/>
</svg>
<div class="t c" style="left:1142px;width:40px;top:99px">調査</div>
<div class="dd" style="left:1159px;top:120px"></div>
<div class="t c" style="left:1195px;width:40px;top:99px">注文</div>
<div class="dd" style="left:1212px;top:120px"></div>
<!-- ===== left panels ===== -->
<!-- white content areas -->
<div class="a" style="left:0;top:144px;width:244px;height:841px;background:#fff"></div>
<!-- structure header -->
<div class="a" style="left:3px;top:146px;width:234px;height:19px;background:#f6f6fb"></div>
<div class="t" style="left:8px;top:149px;letter-spacing:0.8px"><span class="h" style="letter-spacing:0.30px">ｽﾄﾗｸﾁｬｰ</span></div>
<svg style="left:223px;top:150px" width="9" height="11" viewBox="0 0 9 11"><path d="M2 0.8 H7 M2.6 0.8 V5.4 M6.4 0.8 V5.4 M5.4 0.8 V5.4 M0.8 5.6 H8.2 M4.5 5.6 V10" fill="none" stroke="#8a8a8e" stroke-width="1.2"/></svg>
<!-- tree -->
<svg style="left:11px;top:173px" width="8" height="8" viewBox="0 0 8 8"><path d="M7 1 L7 7 L1 7 Z" fill="#5a5a5a" stroke="#3a3a3a" stroke-width="0.6"/></svg>
<div class="cb" style="left:25px;top:171px"><svg width="9" height="9" viewBox="0 0 9 9"><path d="M1.2 4.2 L3.6 6.8 L8 1.6" fill="none" stroke="#111" stroke-width="2"/></svg></div>
<svg style="left:41px;top:168px" width="16" height="17" viewBox="0 0 16 17">
 <path d="M1.5 0.8 L8.4 0.8 L12.2 4.6 L12.2 14.6 L1.5 14.6 Z" fill="#fbfbfd" stroke="#7d8aa6" stroke-width="0.9"/>
 <path d="M8.4 0.8 L8.4 4.6 L12.2 4.6" fill="#e4e8f0" stroke="#7d8aa6" stroke-width="0.8"/>
 <path d="M3.2 11.4 L8.6 9.2 L15.2 11.2 L15.2 13.6 L9.6 16.2 L3.2 13.8 Z" fill="#f7c890" stroke="#8a521a" stroke-width="0.8" stroke-linejoin="round"/>
 <path d="M3.2 11.4 L9.6 13.6 L15.2 11.2 M9.6 13.6 L9.6 16.2" fill="none" stroke="#8a521a" stroke-width="0.7"/>
</svg>
<div class="t" style="left:63px;top:170px;font-weight:bold;letter-spacing:0.4px">test1*</div>

<div class="cb" style="left:44px;top:187px"><svg width="9" height="9" viewBox="0 0 9 9"><path d="M1.2 4.2 L3.6 6.8 L8 1.6" fill="none" stroke="#111" stroke-width="2"/></svg></div>
<svg style="left:61px;top:186px" width="14" height="15" viewBox="0 0 14 15"><path d="M1 3.4 L4.6 0.8 L13 1.8 L13 11.4 L9.6 14.2 L1 12.8 Z" fill="#b4f4b4" stroke="#1a7a2a" stroke-width="1.1" stroke-linejoin="round"/><path d="M9.6 4.6 L13 1.8 L13 11.4 L9.6 14.2 Z" fill="#3fa84a"/><path d="M1 3.4 L4.6 0.8 L13 1.8 L9.6 4.6 Z" fill="#4fbf5a"/><path d="M1 3.4 L9.6 4.6 L13 1.8 M9.6 4.6 L9.6 14.2" fill="none" stroke="#1a7a2a" stroke-width="0.9"/><path d="M1 3.4 L4.6 0.8 L13 1.8 L13 11.4 L9.6 14.2 L1 12.8 Z" fill="none" stroke="#1a7a2a" stroke-width="1.1" stroke-linejoin="round"/></svg>
<div class="t" style="left:82px;top:186px;font-size:11.3px">Solid</div>

<div class="a" style="left:80px;top:201px;width:28px;height:16px;background:#ffe47e"></div>
<div class="cb" style="left:44px;top:203px"><svg width="9" height="9" viewBox="0 0 9 9"><path d="M1.2 4.2 L3.6 6.8 L8 1.6" fill="none" stroke="#111" stroke-width="2"/></svg></div>
<svg style="left:61px;top:202px" width="14" height="15" viewBox="0 0 14 15"><path d="M1 3.4 L4.6 0.8 L13 1.8 L13 11.4 L9.6 14.2 L1 12.8 Z" fill="#b4f4b4" stroke="#1a7a2a" stroke-width="1.1" stroke-linejoin="round"/><path d="M9.6 4.6 L13 1.8 L13 11.4 L9.6 14.2 Z" fill="#3fa84a"/><path d="M1 3.4 L4.6 0.8 L13 1.8 L9.6 4.6 Z" fill="#4fbf5a"/><path d="M1 3.4 L9.6 4.6 L13 1.8 M9.6 4.6 L9.6 14.2" fill="none" stroke="#1a7a2a" stroke-width="0.9"/><path d="M1 3.4 L4.6 0.8 L13 1.8 L13 11.4 L9.6 14.2 L1 12.8 Z" fill="none" stroke="#1a7a2a" stroke-width="1.1" stroke-linejoin="round"/></svg>
<div class="t" style="left:82px;top:202px;font-size:11.3px">Solid</div>

<div class="a" style="left:80px;top:217px;width:42px;height:16px;background:#ffc656"></div>
<div class="cb" style="left:44px;top:219px"><svg width="9" height="9" viewBox="0 0 9 9"><path d="M1.2 4.2 L3.6 6.8 L8 1.6" fill="none" stroke="#111" stroke-width="2"/></svg></div>
<svg style="left:61px;top:218px" width="15" height="15" viewBox="0 0 15 15"><path d="M6 2 L6.4 0.6 L10 0.6 L10 8.8 L6 9.8 Z" fill="#5a2468" stroke="#3a0a4a" stroke-width="0.7"/><path d="M1.2 3.3 L6 2 L6 12.6 L1.2 11 Z" fill="#c890d0" stroke="#5a2a6a" stroke-width="0.8"/><path d="M10 1.4 L13.4 2.8 L13.4 10.8 L10 9.8 Z" fill="#d4a4dc" stroke="#5a2a6a" stroke-width="0.8"/></svg>
<div class="t" style="left:82px;top:218px;font-size:11.2px">Surface</div>

<svg style="left:31px;top:237px" width="7" height="9" viewBox="0 0 7 9"><path d="M1 0.8 L6 4.5 L1 8.2 Z" fill="#fff" stroke="#3a3a3a" stroke-width="1"/></svg>
<div class="cb" style="left:44px;top:235px"><svg width="9" height="9" viewBox="0 0 9 9"><path d="M1.2 4.2 L3.6 6.8 L8 1.6" fill="none" stroke="#111" stroke-width="2"/></svg></div>
<svg style="left:60px;top:234px" width="15" height="15" viewBox="0 0 15 15"><defs><linearGradient id="fg1" x1="0" y1="0" x2="0.6" y2="1"><stop offset="0" stop-color="#fbe9a0"/><stop offset="1" stop-color="#e2b93c"/></linearGradient></defs><path d="M2 4 L5.6 0.9 L11 1 L13.4 2.4 L13.4 9 L2 9 Z" fill="#e6c25a" stroke="#9a7420" stroke-width="0.8" stroke-linejoin="round"/><path d="M1.5 4.3 Q7 4.6 13.6 2.2 L13.3 10.7 Q7 13.6 1.8 13.3 Z" fill="url(#fg1)" stroke="#9a7420" stroke-width="0.8" stroke-linejoin="round"/></svg>
<div class="t" style="left:82px;top:234px;font-style:italic;letter-spacing:1.3px"><span class="h" style="letter-spacing:0.80px">ｶｰﾌﾞ</span></div>

<!-- properties header -->
<div class="a" style="left:3px;top:393px;width:234px;height:19px;background:#f6f6fb"></div>
<div class="t" style="left:7px;top:396px;letter-spacing:-0.4px"><span class="h" style="letter-spacing:-0.90px">ﾌﾟﾛﾊﾟﾃｨ</span></div>
<svg style="left:223px;top:397px" width="9" height="11" viewBox="0 0 9 11"><path d="M2 0.8 H7 M2.6 0.8 V5.4 M6.4 0.8 V5.4 M5.4 0.8 V5.4 M0.8 5.6 H8.2 M4.5 5.6 V10" fill="none" stroke="#8a8a8e" stroke-width="1.2"/></svg>
<!-- property grid -->
<div class="a" style="left:2px;top:413px;width:235px;height:197px;border:1px solid #a6a6a6;background:#fff"></div>
<div class="a" style="left:3px;top:414px;width:21px;height:160px;background:#e1e1e1"></div>
<div class="a" style="left:3px;top:414px;width:234px;height:16px;background:#e1e1e1"></div>
<div class="a" style="left:3px;top:478px;width:234px;height:16px;background:#e1e1e1"></div>
<div class="a" style="left:3px;top:510px;width:234px;height:16px;background:#e1e1e1"></div>
<!-- row lines -->
<div class="a" style="left:24px;top:445px;width:213px;height:1px;background:#e6e6e6"></div>
<div class="a" style="left:24px;top:461px;width:213px;height:1px;background:#e6e6e6"></div>
<div class="a" style="left:24px;top:477px;width:213px;height:1px;background:#e6e6e6"></div>
<div class="a" style="left:24px;top:509px;width:213px;height:1px;background:#e6e6e6"></div>
<div class="a" style="left:24px;top:541px;width:213px;height:1px;background:#e6e6e6"></div>
<div class="a" style="left:24px;top:557px;width:213px;height:1px;background:#e6e6e6"></div>
<div class="a" style="left:24px;top:573px;width:213px;height:1px;background:#e6e6e6"></div>
<!-- column divider segments -->
<div class="a" style="left:105px;top:430px;width:1px;height:48px;background:#e6e6e6"></div>
<div class="a" style="left:105px;top:494px;width:1px;height:16px;background:#e6e6e6"></div>
<div class="a" style="left:105px;top:526px;width:1px;height:48px;background:#e6e6e6"></div>
<!-- chevrons -->
<svg style="left:8px;top:419px" width="9" height="6" viewBox="0 0 9 6"><path d="M0.8 0.8 L4.5 4.6 L8.2 0.8" fill="none" stroke="#3a3a3a" stroke-width="1.3"/></svg>
<svg style="left:8px;top:435px" width="9" height="6" viewBox="0 0 9 6"><path d="M0.8 0.8 L4.5 4.6 L8.2 0.8" fill="none" stroke="#3a3a3a" stroke-width="1.3"/></svg>
<svg style="left:8px;top:483px" width="9" height="6" viewBox="0 0 9 6"><path d="M0.8 0.8 L4.5 4.6 L8.2 0.8" fill="none" stroke="#3a3a3a" stroke-width="1.3"/></svg>
<svg style="left:8px;top:515px" width="9" height="6" viewBox="0 0 9 6"><path d="M0.8 0.8 L4.5 4.6 L8.2 0.8" fill="none" stroke="#3a3a3a" stroke-width="1.3"/></svg>
<!-- rows text -->
<div class="t" style="left:27px;top:415px;font-weight:bold;letter-spacing:-2.4px">マテリアル</div>
<div class="t" style="left:27px;top:431px"><span style="letter-spacing:-3.2px">マテリアル</span>名</div><div class="t" style="left:109px;top:431px">不明<span class="k">な</span>材質</div>
<div class="t g" style="left:48px;top:447px">流体</div><div class="t g" style="left:109px;top:447px"><span class="n">False</span></div>
<div class="t g" style="left:48px;top:463px">密度</div><div class="t g" style="left:109px;top:463px"><span class="k">なし</span></div>
<div class="t" style="left:27px;top:479px;font-weight:bold;letter-spacing:1px">中立面</div>
<div class="t" style="left:27px;top:495px">厚<span class="k">さ</span></div>
<div class="t" style="left:27px;top:511px;font-weight:bold;letter-spacing:1px">表示</div>
<div class="t" style="left:27px;top:527px;width:78px;overflow:hidden"><span class="n" style="transform:scaleX(.9)">Tessellation Quality</span></div><div class="t" style="left:109px;top:527px">5</div>
<div class="t" style="left:27px;top:543px;letter-spacing:1.2px"><span class="h" style="letter-spacing:0.70px">ｽﾀｲﾙ</span></div><div class="t" style="left:109px;top:543px;letter-spacing:0.4px">色別, <span class="h" style="letter-spacing:-0.10px">ｽﾀｲﾙ</span>別</div>
<div class="t g" style="left:27px;top:559px">色</div>
<div class="a" style="left:107px;top:560px;width:18px;height:11px;background:#ff8000;border:1px solid #3a3a3a"></div>
<div class="t g" style="left:135px;top:559px;width:102px;overflow:hidden"><span class="n" style="transform:scaleX(.9)">ARGB: 255, 255, 128, 0</span></div>
<!-- prop tabs -->
<div class="a" style="left:6px;top:612px;width:51px;height:22px;background:#f6f6fb;border-left:1px solid #4a6e92;border-right:1px solid #4a6e92"></div>
<div class="a" style="left:59px;top:612px;width:178px;height:22px;background:#f6f6fb"></div>
<div class="t" style="left:11px;top:615px;color:#2c5a85"><span class="h" style="letter-spacing:-0.50px">ﾌﾟﾛﾊﾟﾃｨ</span></div>
<div class="t" style="left:65px;top:615px;letter-spacing:2px"><span class="h" style="letter-spacing:1.50px">ﾚｲﾔ</span></div>
<!-- options header -->
<div class="a" style="left:3px;top:639px;width:234px;height:20px;background:#f6f6fb"></div>
<div class="t" style="left:7px;top:642px"><span class="h" style="letter-spacing:-0.50px">ｵﾌﾟｼｮﾝ</span> - 選択</div>
<svg style="left:223px;top:644px" width="9" height="11" viewBox="0 0 9 11"><path d="M2 0.8 H7 M2.6 0.8 V5.4 M6.4 0.8 V5.4 M5.4 0.8 V5.4 M0.8 5.6 H8.2 M4.5 5.6 V10" fill="none" stroke="#8a8a8e" stroke-width="1.2"/></svg>
<!-- bottom tabs -->
<div class="a" style="left:0;top:960px;width:241px;height:25px;background:#f6f6fb"></div>
<div class="a" style="left:6px;top:960px;width:82px;height:21px;border-left:1px solid #4a6e92;border-right:1px solid #4a6e92"></div>
<div class="t" style="left:11px;top:963px;color:#2c5a85"><span class="h" style="letter-spacing:-0.50px">ｵﾌﾟｼｮﾝ</span> - 選択</div>
<div class="t" style="left:96px;top:963px">選択</div>
<!-- ===== viewport ===== -->
<div class="a" style="left:244px;top:144px;width:991px;height:816px;background:#fff"></div>
<div class="a" style="left:244px;top:149px;width:986px;height:806px;background:#fff;border:1px solid #aaa692;box-shadow:inset 1px 1px 0 #f4f2e6"></div>
<div class="a" style="left:241px;top:960px;width:994px;height:1px;background:#747474"></div>
<div class="a" style="left:241px;top:961px;width:994px;height:24px;background:#f6f6fb"></div>
<!-- right dock strip -->
<div class="a" style="left:1235px;top:144px;width:29px;height:841px;background:#f0f0f0"></div>
<div class="a" style="left:1236px;top:148px;width:19px;height:26px;background:#f6f6f8"></div>
<div class="a" style="left:1255px;top:148px;width:6px;height:62px;background:#c8c8c8"></div>
<div class="t" style="left:1242px;top:155px;width:14px;height:56px;line-height:14px;writing-mode:vertical-rl;font-size:12px;letter-spacing:-0.2px"><span class="h" style="letter-spacing:-0.70px">ｸｲｯｸｶﾞｲﾄﾞ</span></div>
<div class="t" style="left:257px;top:157px;font-size:14px;line-height:16px;height:16px;color:#6e6e6e">1<span class="k2">つの</span>面<span class="k2">を</span>選択<span class="k2"><span class="s2">し</span>ます</span></div>
<!-- model -->
<svg style="left:0;top:0" width="1264" height="1017" viewBox="0 0 1264 1017">
 <defs>
  <linearGradient id="ol1" x1="0" y1="0" x2="1" y2="0"><stop offset="0" stop-color="#ebaa06"/><stop offset="0.28" stop-color="#e8ab10"/><stop offset="0.55" stop-color="#c6b460"/><stop offset="1" stop-color="#bdb26c"/></linearGradient>
  <linearGradient id="ol2" x1="0" y1="0" x2="1" y2="0"><stop offset="0" stop-color="#bdb26c"/><stop offset="0.66" stop-color="#c2b266"/><stop offset="0.84" stop-color="#e6ab18"/><stop offset="1" stop-color="#ebaa06"/></linearGradient>
  <linearGradient id="og1" x1="0.15" y1="0.9" x2="1" y2="0.1"><stop offset="0" stop-color="#ff7803"/><stop offset="0.45" stop-color="#ff7803"/><stop offset="0.7" stop-color="#fa8322"/><stop offset="1" stop-color="#f98524"/></linearGradient>
 </defs>
 <g stroke-linejoin="round">
 <!-- orange front -->
 <path d="M593.7 528.7 L777.2 580.6 L777.2 887.1 L593.7 834.4 Z" fill="#ff7803"/>
 <path d="M593.7 528.7 L654.4 545.4 L639.5 602.2 L593.7 590.5 Z" fill="url(#og1)"/>
 <!-- yellow right -->
 <path d="M777.2 580.6 L883 490.3 L883 796 L777.2 887.1 Z" fill="#ebaa06"/>
 <path d="M777.2 580.6 L812.4 551.5 L803.8 618.9 L777.2 642.2 Z" fill="url(#ol1)"/>
 <path d="M848.1 520.1 L883 490.3 L883 551.5 L856.5 573 Z" fill="url(#ol2)"/>
 <!-- upper light grey silhouette -->
 <path d="M593.7 283.5 L628.9 253.2 L651.6 294.2 L672.7 275.7 L664.3 222.5 L699.5 191.4 L760.5 209.1 L800.8 282.3 L837 292.2 L822.5 227.1 L883 244.8 L883 490.3 L777.2 580.6 L716.2 564.2 L731.1 629 L639.5 602.2 L654.4 545.4 L593.7 528.7 Z" fill="#d2d2d2"/>
 <!-- right dark grey -->
 <path d="M777.2 336.2 L812.4 305.8 L803.8 374.4 L856.5 328.9 L848.1 274.9 L883 244.8 L883 490.3 L848.1 520.1 L856.5 573 L803.8 618.9 L812.4 551.5 L777.2 580.6 Z" fill="#9c9c9c"/>
 <!-- mid grey faces -->
 <path d="M664.3 222.5 L672.7 275.7 L731.1 384 L716.7 319 Z" fill="#b8b8b8"/>
 <path d="M822.5 227.1 L848.1 274.9 L856.5 328.9 L837 292.2 Z" fill="#c2c2c2"/>
 </g>
 <!-- thin edges -->
 <g fill="none" stroke="#1e1e1e" stroke-width="0.9" stroke-linejoin="round" stroke-linecap="round">
  <path d="M593.7 834.4 L593.7 283.5 L628.9 253.2 L654.4 301 L593.7 283.5"/>
  <path d="M654.4 301 L639.5 357.7 L731.1 384 L716.7 319 L777.2 336.2 L777.2 580.6"/>
  <path d="M651.6 294.2 L672.7 275.7 L731.1 384"/>
  <path d="M672.7 275.7 L664.3 222.5 L716.7 319"/>
  <path d="M664.3 222.5 L699.5 191.4 L760.5 209.1 L812.4 305.8 L777.2 336.2"/>
  <path d="M812.4 305.8 L803.8 374.4 L856.5 328.9 L848.1 274.9 L883 244.8 L822.5 227.1 L848.1 274.9"/>
  <path d="M822.5 227.1 L837 292.2 L856.5 328.9"/>
  <path d="M800.8 282.3 L837 292.2"/>
  <path d="M883 244.8 L883 490.3"/>
  <path d="M593.7 528.7 L654.4 545.4 L639.5 602.2"/>
  <path d="M731.1 629 L716.2 564.2 L777.2 580.6"/>
  <path d="M593.7 590.5 L777.2 642.2" stroke="#5a2a00" stroke-width="0.8"/>
  <path d="M593.7 834.4 L777.2 887.1"/>
  <path d="M777.2 642.2 L883 551.5" stroke="#6a4a00" stroke-width="0.7"/>
 </g>
 <!-- highlighted face outline -->
 <path d="M777.2 580.6 L812.4 551.5 L803.8 618.9 L856.5 573 L848.1 520.1 L883 490.3 L883 796 L777.2 887.1 Z" fill="none" stroke="#0a0a00" stroke-width="1.6" stroke-linejoin="miter"/>
 <path d="M884.6 490 L884.6 796" stroke="#f8f4b0" stroke-width="1.2"/>
 <!-- faint ghost mini toolbar -->
 <g opacity="0.05" fill="none" stroke="#fff" stroke-width="1">
  <rect x="626.5" y="616" width="77.5" height="24" fill="#fff" stroke="none"/>
  <rect x="632.5" y="620.5" width="15" height="15"/>
  <path d="M678 621 L684 624 L684 632 L678 635 L672 632 L672 624 Z"/>
 </g>
 <!-- dashed axis -->
 <path d="M685.5 525.5 L685.5 888" stroke="#14421c" stroke-width="1.3" stroke-dasharray="5.5 2"/>
 <!-- origin triad -->
 <path d="M738.5 815 L738.5 789" stroke="#a27c7a" stroke-width="2.6"/>
 <path d="M738.7 773.4 L742.4 790.4 L735 790.4 Z" fill="#5a8af8"/>
 <path d="M739 814.8 L752 803.2" stroke="#8a7a10" stroke-width="2.6"/>
 <path d="M762.6 794.4 L756.4 805.6 L750.4 800.4 Z" fill="#1a8a1a"/>
 <path d="M739.4 815.8 L764 822.8" stroke="#ff3a10" stroke-width="2.6"/>
 <path d="M780 827.2 L763 826 L764.6 819.4 Z" fill="#ff1010"/>
 <circle cx="738.3" cy="815.4" r="2.2" fill="#a8a8a0" stroke="#7a7a70" stroke-width="0.6"/>
 <text x="738.5" y="766.8" text-anchor="middle" font-family="Liberation Sans, sans-serif" font-weight="bold" font-size="10.4" fill="#8a3a9a">Z</text>
 <text x="768.4" y="792.6" text-anchor="middle" font-family="Liberation Sans, sans-serif" font-weight="bold" font-size="10.4" fill="#9a960e">Y</text>
 <text x="790.6" y="834" text-anchor="middle" font-family="Liberation Sans, sans-serif" font-weight="bold" font-size="10.4" fill="#ff6a10">X</text>
 <!-- mouse cursor -->
 <path d="M827.6 692.2 L827.6 708.4 L831.4 704.8 L834.2 711.2 L836.6 710.2 L833.8 703.8 L839 703.6 Z" fill="#fff" stroke="#111" stroke-width="1" stroke-linejoin="round"/>
 <!-- corner triad -->
 <path d="M289.3 891.8 L300.5 884.2 L316.5 888.2 L307.2 896.2 Z" fill="#eef4fc" stroke="#b4c2d8" stroke-width="0.7"/>
 <path d="M289.3 891.8 L307.2 896.2 L307 913.9 L290.4 908.1 Z" fill="#dfe9f8" stroke="#b4c2d8" stroke-width="0.7"/>
 <path d="M307.2 896.2 L316.5 888.2 L315.6 904.6 L307 913.9 Z" fill="#c6d2ea" stroke="#b4c2d8" stroke-width="0.7"/>
 <ellipse cx="303.4" cy="888.6" rx="3.6" ry="2.6" fill="#0a0aff"/>
 <ellipse cx="298.2" cy="902.8" rx="3.9" ry="3.8" fill="#109a1a"/>
 <ellipse cx="313" cy="900.6" rx="2.9" ry="3.9" fill="#ff1010"/>
 <path d="M303.5 882.4 L303.5 875" stroke="#0a0aff" stroke-width="1.4"/>
 <path d="M303.5 866.4 L306.4 877.6 L300.6 877.6 Z" fill="#0a0aff"/>
 <path d="M319.2 903 L326 904.8" stroke="#ff1010" stroke-width="1.4"/>
 <path d="M335 907.4 L323.6 907.6 L325.4 901.8 Z" fill="#ff1010"/>
 <text x="303.5" y="862" text-anchor="middle" font-family="Liberation Sans, sans-serif" font-weight="bold" font-size="10.5" fill="#1a1ad8">Z</text>
 <text x="318.4" y="889.4" text-anchor="middle" font-family="Liberation Sans, sans-serif" font-weight="bold" font-size="10.5" fill="#1a7a1a">Y</text>
 <text x="342.6" y="913.8" text-anchor="middle" font-family="Liberation Sans, sans-serif" font-weight="bold" font-size="10.5" fill="#f01a1a">X</text>
 <!-- scale bar -->
 <rect x="1150" y="927.6" width="70" height="2" fill="#2222dd"/>
 <text x="1185" y="942.4" text-anchor="middle" font-family="Liberation Sans, sans-serif" font-size="10.5" fill="#2a2acc">20mm</text>
</svg>
<!-- doc tab -->
<div class="a" style="left:241px;top:960px;width:1px;height:25px;background:#8a8a8a"></div>
<div class="a" style="left:244px;top:961px;width:71px;height:19px;border:1px solid #5a7a9c;border-top:none;background:#f6f6fb;box-shadow:0 1px 0 #c4d0dc"></div>
<svg style="left:249px;top:962px" width="16" height="16" viewBox="0 0 16 16">
 <path d="M1 6.4 L6 4 L6 2.4 L9.4 0.8 L13 2.6 L13 6 L15.2 7.2 L15.2 11.4 L8 15.2 L1 11.4 Z" fill="#f7cfa0" stroke="#5a3a1a" stroke-width="1" stroke-linejoin="round"/>
 <path d="M1 6.4 L8 10 L15.2 7.2 M8 10 L8 15.2 M6 4 L9.6 5.8 L13 4.2 M9.6 5.8 L9.6 9" fill="none" stroke="#5a3a1a" stroke-width="0.8"/>
</svg>
<div class="t" style="left:268px;top:963px;font-weight:bold;color:#2c5a85;font-size:11.5px;letter-spacing:0.2px">test1*</div>
<svg style="left:305px;top:967px" width="7" height="7" viewBox="0 0 7 7"><path d="M0.8 0.8 L6.2 6.2 M6.2 0.8 L0.8 6.2" stroke="#6a6a6a" stroke-width="1.6"/></svg>
<svg style="left:1194px;top:965px" width="38" height="11" viewBox="0 0 38 11">
 <path d="M6.4 1.4 L6.4 9.6 L1.6 5.5 Z M16 1.4 L16 9.6 L20.8 5.5 Z" fill="none" stroke="#2a2a2a" stroke-width="1"/>
 <path d="M29.6 2.4 L36.4 9 M36.4 2.4 L29.6 9" stroke="#2a2a2a" stroke-width="1.4"/>
</svg>
<!-- ===== status bar ===== -->
<div class="a" style="left:0;top:985px;width:1264px;height:32px;background:#2d5c88"></div>
<div class="t w" style="left:9px;top:995px">1<span class="k3">つの</span>面<span class="k3">を</span>選択<span class="k3"><span class="s3">し</span>ます</span></div>
<div class="a" style="left:524px;top:990px;width:1px;height:25px;background:#5f84a8"></div>
<div class="a" style="left:675px;top:988px;width:28px;height:27px;background:#46709a;border-left:1px solid #6a8cae"></div>
<svg style="left:681px;top:994px" width="16" height="16" viewBox="0 0 18 18"><path d="M5.6 0.8 H12.4 L17.2 5.6 V12.4 L12.4 17.2 H5.6 L0.8 12.4 V5.6 Z" fill="#ff0000" stroke="#fff" stroke-width="1"/></svg>
<svg style="left:708px;top:995px" width="14" height="14" viewBox="0 0 14 14"><circle cx="7" cy="7" r="6.4" fill="#e0242c" stroke="#c01a20" stroke-width="0.6"/><path d="M7 2.6 V8.2" stroke="#fff" stroke-width="2" stroke-linecap="round"/><circle cx="7" cy="10.8" r="1.1" fill="#fff"/></svg>
<div class="ud" style="left:727px;top:1000px"></div>
<div class="a" style="left:739px;top:990px;width:1px;height:25px;background:#5f84a8"></div>
<div class="t w c" style="left:769px;width:40px;top:995px">面</div>
<div class="a" style="left:839px;top:990px;width:1px;height:25px;background:#5f84a8"></div>
<div class="t w" style="left:896px;top:995px">1<span class="h" style="letter-spacing:-0.50px">ﾎﾞﾃﾞｨ</span></div>
<!-- right icons -->
<svg style="left:992px;top:990px" width="10" height="24" viewBox="0 0 10 24"><path d="M5 2.4 L9 7.4 H1 Z M5 21.6 L9 16.6 H1 Z" fill="#6a88a6"/></svg>
<svg style="left:1009px;top:993px" width="20" height="18" viewBox="0 0 20 18">
 <path d="M1.6 2 L1.6 14.6 L4.8 11.8 L7 16.6 L9 15.8 L6.8 11 L10.8 10.8 Z" fill="#fff" stroke="#111" stroke-width="0.9" stroke-linejoin="round"/>
 <path d="M12 3.4 Q17.6 3 16.8 8 Q16.2 11 12.6 11.6" fill="none" stroke="#5eb3f3" stroke-width="2"/>
 <path d="M9.6 3.6 L13.6 0.4 L13.6 6.6 Z" fill="#5eb3f3"/>
</svg>
<svg style="left:1034px;top:993px" width="14" height="18" viewBox="0 0 14 18"><path d="M1.6 2 L1.6 14.6 L4.8 11.8 L7 16.6 L9 15.8 L6.8 11 L10.8 10.8 Z" fill="#fff" stroke="#111" stroke-width="0.9" stroke-linejoin="round"/></svg>
<div class="ud" style="left:1053px;top:1000px"></div>
<svg style="left:1068px;top:995px" width="18" height="14" viewBox="0 0 18 14"><rect x="1.4" y="1.4" width="15.2" height="11.2" fill="none" stroke="#5eb3f3" stroke-width="1.8" stroke-dasharray="4 2.2"/></svg>
<div class="ud" style="left:1089px;top:1000px"></div>
<div class="a" style="left:1100px;top:990px;width:1px;height:25px;background:#5f84a8"></div>
<svg style="left:1104px;top:993px" width="18" height="18" viewBox="0 0 18 18">
 <g fill="none" stroke="#5eb3f3" stroke-width="2.2"><path d="M8.6 9 Q10.4 5.4 8.4 3.4 M9 9.4 Q12.6 11 14.6 9.4 M8.6 9.4 Q6.8 12.6 8.8 14.6 M8.6 9 Q5.4 7.2 3.4 8.6"/></g>
 <g fill="#5eb3f3"><path d="M5.4 4.8 L9.4 0.6 L11.6 5.2 Z"/><path d="M13.2 5.8 L17.4 9.6 L12.8 12.2 Z"/><path d="M12.4 13.2 L8.2 17.4 L6 12.8 Z"/><path d="M4.8 12.4 L0.6 8.6 L5.2 6 Z"/></g>
</svg>
<div class="ud" style="left:1125px;top:1000px"></div>
<svg style="left:1140px;top:994px" width="17" height="17" viewBox="0 0 18 18">
 <path d="M9 2 V16 M2 9 H16" stroke="#5eb3f3" stroke-width="2"/>
 <g fill="#5eb3f3"><path d="M9 0 L12.4 4.4 L5.6 4.4 Z"/><path d="M9 18 L12.4 13.6 L5.6 13.6 Z"/><path d="M0 9 L4.4 5.6 L4.4 12.4 Z"/><path d="M18 9 L13.6 5.6 L13.6 12.4 Z"/></g>
</svg>
<svg style="left:1163px;top:993px" width="18" height="18" viewBox="0 0 18 18">
 <circle cx="7.2" cy="7.4" r="5.2" fill="#fff" stroke="#5eb3f3" stroke-width="2"/>
 <path d="M11.4 11.6 L15.6 16" stroke="#5eb3f3" stroke-width="3" stroke-linecap="round"/>
</svg>
<div class="ud" style="left:1184px;top:1000px"></div>
<svg style="left:1198px;top:995px" width="18" height="14" viewBox="0 0 18 14"><path d="M16.6 1.2 L17.6 4.4 L9.4 9 L10.6 12 L0.8 12.2 L5.2 3.6 L6.8 6.2 Z" fill="#5eb3f3"/></svg>
<svg style="left:1222px;top:995px" width="18" height="14" viewBox="0 0 18 14"><path d="M1.4 12.8 L0.4 9.6 L8.6 5 L7.4 2 L17.2 1.8 L12.8 10.4 L11.2 7.8 Z" fill="#7a93aa"/></svg>
</body>
</html>
